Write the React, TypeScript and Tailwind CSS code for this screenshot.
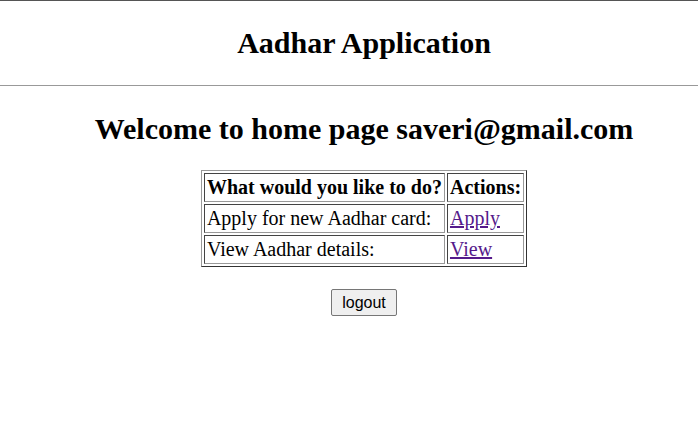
import React from "react";

const rows = [
  { label: "Apply for new Aadhar card:", action: "Apply" },
  { label: "View Aadhar details:", action: "View" },
];

const cell =
  "border border-t-[#444] border-l-[#444] border-b-[#999] border-r-[#999] px-[2px] py-[2px] text-left";

export default function App() {
  return (
    <div className="min-h-[427px] bg-white text-black font-['Liberation_Serif','Times_New_Roman',serif]">
      {/* Header */}
      <div className="border-t border-[#555] border-b border-b-[#999] h-[86px] flex items-center justify-center pl-[30px]">
        <h2 className="text-[30px] font-bold leading-none">Aadhar Application</h2>
      </div>

      <div className="flex flex-col items-center pl-[30px]">
        <h1 className="mt-[28px] text-[30px] font-bold leading-none">
          Welcome to home page saveri@gmail.com
        </h1>

        <table className="mt-[26px] border-separate border-spacing-[2px] border border-t-[#999] border-l-[#999] border-b-[#333] border-r-[#333] text-[20px] leading-[1.15]">
          <thead>
            <tr>
              <th className={`${cell} font-bold`}>What would you like to do?</th>
              <th className={`${cell} font-bold`}>Actions:</th>
            </tr>
          </thead>
          <tbody>
            {rows.map((r) => (
              <tr key={r.action}>
                <td className={cell}>{r.label}</td>
                <td className={cell}>
                  <a href="#" className="text-[#551a8b] underline">
                    {r.action}
                  </a>
                </td>
              </tr>
            ))}
          </tbody>
        </table>

        <button className="mt-[22px] h-[27px] px-[10px] text-[16px] font-['Liberation_Sans',Arial,sans-serif] bg-[#efefef] border border-[#767676] rounded-[2px]">
          logout
        </button>
      </div>
    </div>
  );
}
